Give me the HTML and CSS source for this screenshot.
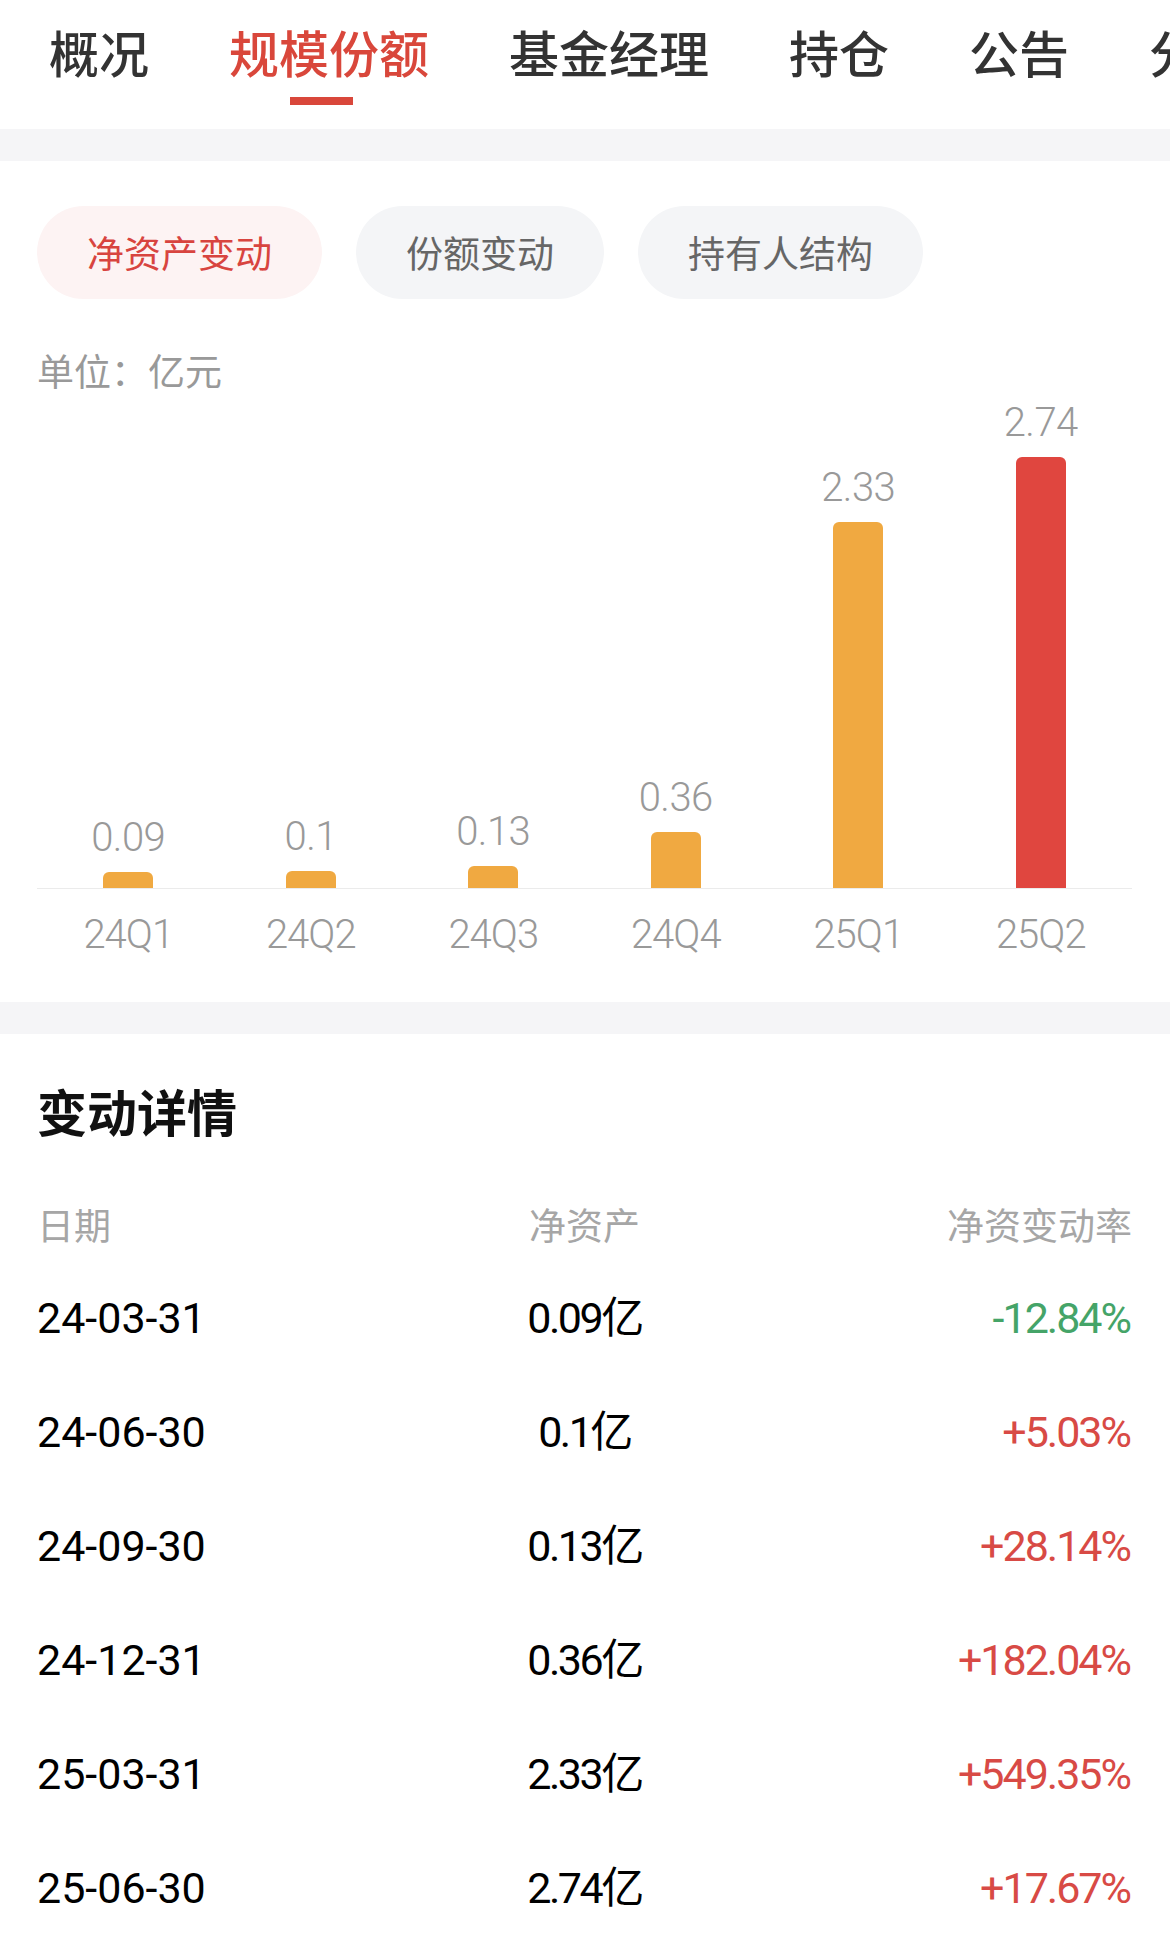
FILE: index.html
```html
<!DOCTYPE html>
<html lang="zh-CN">
<head>
<meta charset="utf-8">
<title>规模份额</title>
<link rel="stylesheet" href="styles.css">
</head>
<body>
<div class="page">
  <nav class="tabs">
    <div class="tab">概况</div>
    <div class="tab active">规模份额</div>
    <div class="tab">基金经理</div>
    <div class="tab">持仓</div>
    <div class="tab">公告</div>
    <div class="tab">分红</div>
  </nav>
  <div class="band"></div>

  <section class="chart-card">
    <div class="pills">
      <div class="pill active">净资产变动</div>
      <div class="pill">份额变动</div>
      <div class="pill">持有人结构</div>
    </div>
    <div class="unit">单位：亿元</div>
    <div class="plot">
      <div class="col"><div class="val">0.09</div><div class="bar" style="height:16px"></div></div>
      <div class="col"><div class="val">0.1</div><div class="bar" style="height:17px"></div></div>
      <div class="col"><div class="val">0.13</div><div class="bar" style="height:22px"></div></div>
      <div class="col"><div class="val">0.36</div><div class="bar" style="height:56px"></div></div>
      <div class="col"><div class="val">2.33</div><div class="bar" style="height:366px"></div></div>
      <div class="col"><div class="val">2.74</div><div class="bar latest" style="height:431px"></div></div>
    </div>
    <div class="xlabels">
      <div class="xl">24Q1</div>
      <div class="xl">24Q2</div>
      <div class="xl">24Q3</div>
      <div class="xl">24Q4</div>
      <div class="xl">25Q1</div>
      <div class="xl">25Q2</div>
    </div>
  </section>

  <div class="band"></div>

  <section class="detail">
    <h2 class="title">变动详情</h2>
    <div class="row head">
      <div class="c1">日期</div>
      <div class="c2">净资产</div>
      <div class="c3">净资变动率</div>
    </div>
    <div class="row">
      <div class="c1">24-03-31</div>
      <div class="c2">0.09亿</div>
      <div class="c3 down">-12.84%</div>
    </div>
    <div class="row">
      <div class="c1">24-06-30</div>
      <div class="c2">0.1亿</div>
      <div class="c3 up">+5.03%</div>
    </div>
    <div class="row">
      <div class="c1">24-09-30</div>
      <div class="c2">0.13亿</div>
      <div class="c3 up">+28.14%</div>
    </div>
    <div class="row">
      <div class="c1">24-12-31</div>
      <div class="c2">0.36亿</div>
      <div class="c3 up">+182.04%</div>
    </div>
    <div class="row">
      <div class="c1">25-03-31</div>
      <div class="c2">2.33亿</div>
      <div class="c3 up">+549.35%</div>
    </div>
    <div class="row">
      <div class="c1">25-06-30</div>
      <div class="c2">2.74亿</div>
      <div class="c3 up">+17.67%</div>
    </div>
  </section>
</div>
</body>
</html>
```

FILE: styles.css
```css
* { box-sizing: border-box; }
html, body { margin: 0; padding: 0; background: #fff; }
body {
  width: 1170px;
  font-family: Roboto, "Noto Sans CJK SC", sans-serif;
  color: #111;
}
.page { width: 1170px; overflow: hidden; }

.tabs {
  display: flex;
  gap: 80px;
  height: 129px;
  padding: 26px 0 0 49px;
  white-space: nowrap;
  overflow: hidden;
  background: #fff;
}
.tab {
  position: relative;
  flex: none;
  font-family: "Noto Sans CJK SC", sans-serif;
  font-size: 50px;
  line-height: 50px;
  font-weight: 500;
  color: #333;
}
.tab.active { color: #d9473b; }
.tab.active::after {
  content: "";
  position: absolute;
  left: 61px;
  top: 71px;
  width: 63px;
  height: 8px;
  background: #d9473b;
}

.band { height: 32px; background: #f5f5f7; }

.chart-card { padding: 45px 38px 47px 37px; }
.pills { display: flex; gap: 34px; }
.pill {
  height: 93px;
  line-height: 93px;
  padding: 0 50px;
  border-radius: 47px;
  background: #f4f5f7;
  color: #666;
  font-family: "Noto Sans CJK SC", sans-serif;
  font-size: 37px;
}
.pill.active { background: #fdf3f3; color: #d8443f; }

.unit {
  margin-top: 53px;
  font-family: "Noto Sans CJK SC", sans-serif;
  font-size: 37px;
  line-height: 37px;
  color: #999;
}

.plot {
  display: flex;
  height: 500px;
  border-bottom: 1px solid #ebebeb;
}
.col {
  flex: 1;
  display: flex;
  flex-direction: column;
  align-items: center;
  justify-content: flex-end;
}
.val {
  font-size: 40px;
  line-height: 40px;
  font-weight: 300;
  color: #999;
  letter-spacing: -0.5px;
  margin-bottom: 14px;
}
.bar {
  width: 50px;
  background: #f0a941;
  border-radius: 6px 6px 0 0;
}
.bar.latest { background: #e0463f; }

.xlabels { display: flex; padding-top: 26px; }
.xl {
  flex: 1;
  text-align: center;
  font-size: 40px;
  line-height: 40px;
  font-weight: 300;
  color: #999;
  letter-spacing: -1px;
}

.detail { padding: 51px 38px 0 37px; }
.title {
  margin: 0;
  font-family: "Noto Sans CJK SC", sans-serif;
  font-size: 50px;
  line-height: 50px;
  font-weight: 700;
  color: #111;
}
.row {
  display: grid;
  grid-template-columns: 1fr auto 1fr;
  align-items: center;
  height: 114px;
  font-size: 43px;
  line-height: 43px;
  font-weight: 400;
  color: #000;
}
.row.head {
  margin-top: 52px;
  height: 74px;
  font-family: "Noto Sans CJK SC", sans-serif;
  font-size: 37px;
  line-height: 37px;
  font-weight: 400;
  color: #a6a6a6;
}
.c1 { text-align: left; }
.c2 { text-align: center; letter-spacing: -2.5px; }
.c3 { text-align: right; letter-spacing: -2px; padding-right: 2px; }
.row.head .c2, .row.head .c3 { letter-spacing: 0; padding-right: 0; }
.down { color: #45a468; }
.up { color: #d84a45; }
```
